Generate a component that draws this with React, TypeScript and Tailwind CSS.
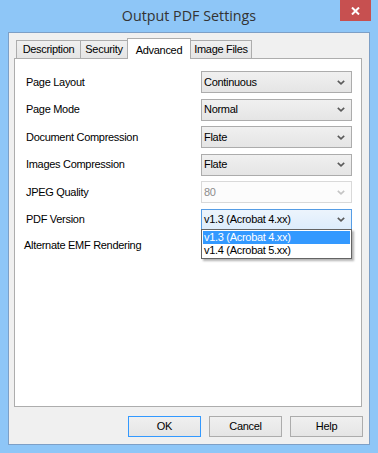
import React from "react";

// ---------------------------------------------------------------------------
// Option rows on the "Advanced" tab
// ---------------------------------------------------------------------------

interface SettingRow {
  label: string;
  value?: string;
  disabled?: boolean;
  open?: boolean;
}

const ROWS: SettingRow[] = [
  { label: "Page Layout", value: "Continuous" },
  { label: "Page Mode", value: "Normal" },
  { label: "Document Compression", value: "Flate" },
  { label: "Images Compression", value: "Flate" },
  { label: "JPEG Quality", value: "80", disabled: true },
  { label: "PDF Version", value: "v1.3 (Acrobat 4.xx)", open: true },
  { label: "Alternate EMF Rendering" },
];

const TABS = ["Description", "Security", "Advanced", "Image Files"];
const TAB_WIDTHS: Record<string, string> = {
  Description: "w-[65px]",
  Security: "w-[48px]",
  Advanced: "w-[64px]",
  "Image Files": "w-[62px]",
};

function Chevron({ muted }: { muted?: boolean }) {
  return (
    <svg width="8" height="5" viewBox="0 0 8 5" className="shrink-0">
      <path
        d="M0.8 0.8 L4 3.8 L7.2 0.8"
        fill="none"
        stroke={muted ? "#c4c4c4" : "#5a5a5a"}
        strokeWidth="1.6"
      />
    </svg>
  );
}

function Combo({ row }: { row: SettingRow }) {
  if (row.disabled) {
    return (
      <div className="w-[151px] h-[22px] flex items-center justify-between pl-[2px] pr-[6px] border border-[#d9d9d9] bg-[#fcfcfc] text-[#8d8d8d]">
        <span>{row.value}</span>
        <Chevron muted />
      </div>
    );
  }

  if (row.open) {
    return (
      <div className="relative w-[151px] h-[22px]">
        <div className="h-full flex items-center justify-between pl-[2px] pr-[6px] border border-[#569de5] bg-gradient-to-b from-[#ecf4fc] to-[#dcecfc]">
          <span>{row.value}</span>
          <Chevron />
        </div>
        {/* open drop-down list */}
        <div className="absolute left-0 top-[20px] w-[151px] z-10 bg-white border border-[#646464] shadow-[2px_2px_2px_rgba(0,0,0,0.3)]">
          <div className="h-[13px] mt-[1px] mx-[1px] pl-[1px] flex items-center bg-[#3399ff] text-white leading-none">
            v1.3 (Acrobat 4.xx)
          </div>
          <div className="h-[13px] mb-[1px] mx-[1px] pl-[1px] flex items-center text-black leading-none">
            v1.4 (Acrobat 5.xx)
          </div>
        </div>
      </div>
    );
  }

  return (
    <div className="w-[151px] h-[22px] flex items-center justify-between pl-[2px] pr-[6px] border border-[#acacac] bg-gradient-to-b from-[#f0f0f0] to-[#e5e5e5]">
      <span>{row.value}</span>
      <Chevron />
    </div>
  );
}

function DialogButton({ label, primary }: { label: string; primary?: boolean }) {
  return (
    <div
      className={
        "w-[73px] h-[21px] flex items-center justify-center border bg-gradient-to-b from-[#f0f0f0] to-[#e5e5e5] text-black " +
        (primary ? "border-[#3399ff]" : "border-[#acacac]")
      }
    >
      {label}
    </div>
  );
}

export default function App() {
  return (
    <div
      className="w-[378px] h-[453px] bg-[#8ec6f7] flex flex-col overflow-hidden text-[11px] tracking-[-0.3px] text-black"
      style={{ fontFamily: '"Liberation Sans", Arial, sans-serif' }}
    >
      {/* Title bar */}
      <div className="relative h-[32px] shrink-0 flex items-center justify-center">
        <span
          className="text-[14.3px] tracking-normal text-[#333333] -mt-[1px]"
          style={{ fontFamily: '"Open Sans", "Noto Sans", sans-serif' }}
        >
          Output PDF Settings
        </span>
        <div className="absolute right-[7px] top-0 w-[31px] h-[21px] bg-[#c75050] flex items-center justify-center">
          <svg width="9" height="8" viewBox="0 0 9 8">
            <path d="M1 0.5 L8 7.5 M8 0.5 L1 7.5" stroke="#ffffff" strokeWidth="2" />
          </svg>
        </div>
      </div>

      {/* Client area */}
      <div className="mx-[8px] mb-[8px] flex-1 flex flex-col bg-[#f0f0f0] border border-[#7d9fc6] pl-[5px] pt-[5px] pr-[6px]">
        {/* Tab strip */}
        <div className="h-[20px] flex items-end pl-[2px]">
          {TABS.map((tab) =>
            tab === "Advanced" ? (
              <div
                key={tab}
                className={
                  TAB_WIDTHS[tab] +
                  " relative z-10 h-[21px] -mb-px flex items-start justify-center pt-[3px] bg-white border border-b-0 border-[#adadad] -ml-px"
                }
              >
                {tab}
              </div>
            ) : (
              <div
                key={tab}
                className={
                  TAB_WIDTHS[tab] +
                  " h-[18px] flex items-center justify-center bg-gradient-to-b from-[#f0f0f0] to-[#e5e5e5] border border-b-0 border-[#adadad] -ml-px first:ml-0"
                }
              >
                {tab}
              </div>
            )
          )}
        </div>

        {/* Tab panel */}
        <div className="w-[348px] h-[349px] bg-white border border-[#adadad] pt-[12px] pl-[11px] pr-[9px] flex flex-col gap-[5.5px]">
          {ROWS.map((row) => (
            <div key={row.label} className="h-[22px] flex items-center justify-between">
              <span className={row.value ? "" : "-ml-[2px] -mt-[3px]"}>{row.label}</span>
              {row.value && <Combo row={row} />}
            </div>
          ))}
        </div>

        {/* Buttons */}
        <div className="mt-[9px] flex justify-end gap-[8px]">
          <DialogButton label="OK" primary />
          <DialogButton label="Cancel" />
          <DialogButton label="Help" />
        </div>
      </div>
    </div>
  );
}
